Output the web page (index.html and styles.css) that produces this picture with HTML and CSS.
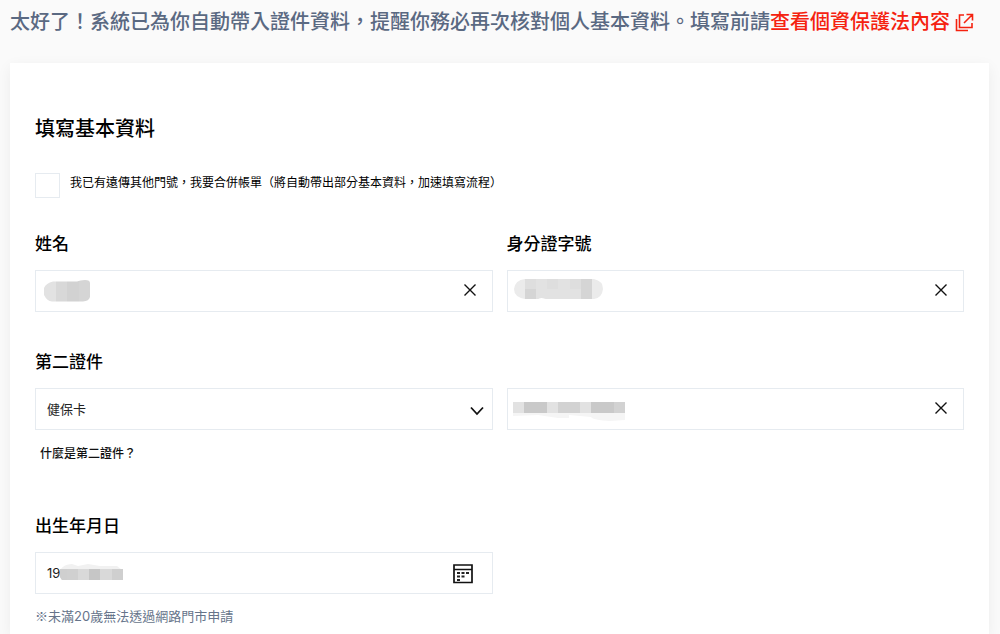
FILE: index.html
```html
<!DOCTYPE html>
<html lang="zh-Hant">
<head>
<meta charset="utf-8">
<meta name="viewport" content="width=device-width, initial-scale=1">
<title>填寫基本資料</title>
<link rel="stylesheet" href="styles.css">
</head>
<body>
<p class="notice">太好了！系統已為你自動帶入證件資料，提醒你務必再次核對個人基本資料。填寫前請<a class="notice-link" href="#privacy">查看個資保護法內容<svg class="external" viewBox="0 0 20 20" aria-hidden="true"><path d="M9 3H4.500V15.500H17V11M11.500 2.500H17.500V8.500M17 3L9 11M1.500 7V18.500H13"/></svg></a></p>
<main class="card">
  <h1 class="title">填寫基本資料</h1>
  <label class="merge"><input class="checkbox" type="checkbox"><span>我已有遠傳其他門號，我要合併帳單（將自動帶出部分基本資料，加速填寫流程）</span></label>
  <form class="form">
    <div class="field">
      <label class="label" for="name">姓名</label>
      <div class="control">
        <input class="box" id="name" type="text">
        <svg class="mask mask-name" viewBox="0 0 46 22" aria-hidden="true">
          <clipPath id="c1"><path d="M9 1.500H33Q36 0 41 0Q46 0 46 3V17Q45 21 39 21.500H8Q3 21 0 15V8Q2 3 9 1.500Z"/></clipPath>
          <g clip-path="url(#c1)"><path fill="#e2e2e2" d="M0 0h12v22H0z"/><path fill="#d8d8d8" d="M12 0h11v22H12z"/><path fill="#d2d2d2" d="M23 0h12v22H23z"/><path fill="#d5d5d5" d="M35 0h11v22H35z"/></g>
        </svg>
        <button class="icon" type="button" aria-label="清除姓名"><svg viewBox="0 0 14 14"><path d="M1.500 1.500L12.500 12.500M12.500 1.500L1.500 12.500"/></svg></button>
      </div>
    </div>
    <div class="field">
      <label class="label" for="idno">身分證字號</label>
      <div class="control">
        <input class="box" id="idno" type="text">
        <svg class="mask mask-id" viewBox="0 0 90 22" aria-hidden="true">
          <clipPath id="c2"><path d="M11 1H80Q89 3 89 11Q88 20 80 21H32Q27 19 24 21H11Q0 19 0 11Q1 2 11 1Z"/></clipPath>
          <g clip-path="url(#c2)"><path fill="#ebebeb" d="M0 0h90v22H0z"/><path fill="#dedede" d="M11 0h11v11H11zM33 0h11v11H33zM56 0h11v11H56z"/><path fill="#d5d5d5" d="M11 11h11v11H11zM67 0h11v22H67z"/><path fill="#e2e2e2" d="M22 0h11v22H22zM44 0h12v22H44zM33 11h11v11H33zM56 11h11v11H56z"/></g>
        </svg>
        <button class="icon" type="button" aria-label="清除身分證字號"><svg viewBox="0 0 14 14"><path d="M1.500 1.500L12.500 12.500M12.500 1.500L1.500 12.500"/></svg></button>
      </div>
    </div>
    <div class="field">
      <label class="label" for="second">第二證件</label>
      <div class="control">
        <select class="box" id="second"><option>健保卡</option></select>
        <svg class="chevron" viewBox="0 0 14 10" aria-hidden="true"><path d="M1 1.500L7 8L13 1.500"/></svg>
      </div>
      <a class="help" href="#second-id">什麼是第二證件？</a>
    </div>
    <div class="field field-end">
      <div class="control">
        <input class="box" type="text" aria-label="第二證件號碼">
        <svg class="mask mask-second" viewBox="0 0 112 20" aria-hidden="true"><path fill="#f5f5f5" d="M0 11H112V18L97 19Q80 18 78 15L56 13V16H45L25 13L0 14Z"/><path fill="#e2e2e2" d="M0 0h112v11H0z"/><path fill="#c9c9c9" d="M11 0h23v11H11zM78 0h23v11H78z"/><path fill="#d2d2d2" d="M45 0h22v11H45zM101 0h11v11h-11z"/></svg>
        <button class="icon" type="button" aria-label="清除第二證件號碼"><svg viewBox="0 0 14 14"><path d="M1.500 1.500L12.500 12.500M12.500 1.500L1.500 12.500"/></svg></button>
      </div>
    </div>
    <div class="field">
      <label class="label" for="birth">出生年月日</label>
      <div class="control">
        <input class="box" id="birth" type="text" value="19">
        <svg class="mask mask-birth" viewBox="0 0 63 17" aria-hidden="true"><path fill="#f1f1f1" d="M0 6Q4 0 12 0L18 2L28 0L40 2L57 2L62 6Z"/><path fill="#d9d9d9" d="M0 5h63v11H2L0 13z"/><path fill="#cfcfcf" d="M0 5h7v11H2L0 13zM52 5h11v11H52z"/><path fill="#c6c6c6" d="M29 5h11v11H29z"/><path fill="#d0d0d0" d="M7 5h11v11H7z"/></svg>
        <button class="icon icon-date" type="button" aria-label="選擇日期"><svg viewBox="0 0 20 20"><path d="M1 1H19V18.500H1ZM1 5.500H19"/><path class="dots" d="M4 8h3v2H4zM8.500 8h3v2h-3zM13 8h3v2h-3zM4 11.500h3v2H4zM8.500 11.500h3v2h-3zM4 15h3v2H4z"/></svg></button>
      </div>
      <p class="note"><span class="note-mark">※</span>未滿20歲無法透過網路門市申請</p>
    </div>
  </form>
</main>
</body>
</html>
```
FILE: styles.css
```css
* { box-sizing: border-box; }

body {
  margin: 0;
  min-height: 100vh;
  display: flex;
  flex-direction: column;
  background: #fafafa;
  color: #000;
  font-family: "Inter", "Noto Sans CJK TC", sans-serif;
}

.notice {
  margin: 0;
  padding: 7px 10px 26px;
  font-size: 20px;
  line-height: 30px;
  font-weight: 500;
  color: #5a6982;
}

.notice-link { color: #f5220f; text-decoration: none; }

.external {
  width: 20px;
  height: 20px;
  margin-left: 5px;
  vertical-align: -3px;
  fill: none;
  stroke: currentColor;
  stroke-width: 1.6;
}

.card {
  flex: 1;
  margin: 0 11px 0 10px;
  padding: 51px 25px 6px;
  background: #fff;
  box-shadow: 0 4px 14px rgba(0, 0, 0, 0.06);
}

.title {
  margin: 0 0 29px;
  font-size: 20px;
  line-height: 30px;
  font-weight: 500;
}

.merge {
  display: flex;
  gap: 10px;
  font-size: 12px;
  line-height: 20px;
}

.checkbox {
  appearance: none;
  flex: none;
  width: 25px;
  height: 25px;
  margin: 0;
  border: 1px solid #e6ebf0;
  background: #fff;
}

.form {
  display: grid;
  grid-template-columns: 1fr 1fr;
  column-gap: 14px;
  margin-top: 32px;
}

.field { padding-bottom: 36px; }
.field:last-child { padding-bottom: 0; }
.field-end { padding-top: 40px; }

.label {
  display: block;
  margin-bottom: 12px;
  font-size: 17px;
  line-height: 28px;
  font-weight: 500;
}

.control { position: relative; }

.box {
  appearance: none;
  display: block;
  width: 100%;
  height: 42px;
  padding: 0 11px;
  border: 1px solid #e6ebf0;
  border-radius: 0;
  background: #fff;
  color: #222;
  font: 13px "Inter", "Noto Sans CJK TC", sans-serif;
}

.icon {
  position: absolute;
  top: 8px;
  right: 11px;
  width: 24px;
  height: 24px;
  padding: 5px;
  border: 0;
  background: none;
}

.icon svg {
  display: block;
  width: 14px;
  height: 14px;
  fill: none;
  stroke: #111;
  stroke-width: 1.4;
}

.icon-date { top: 10px; right: 18px; padding: 2px; }
.icon-date svg { width: 20px; height: 20px; stroke-width: 1.7; }
.icon-date .dots { fill: #222; stroke: none; }

.chevron {
  position: absolute;
  top: 18px;
  right: 9px;
  width: 14px;
  height: 10px;
  fill: none;
  stroke: #111;
  stroke-width: 1.8;
  pointer-events: none;
}

.mask { position: absolute; pointer-events: none; }
.mask-name { top: 10px; left: 9px; width: 46px; height: 22px; }
.mask-id { top: 8px; left: 7px; width: 90px; height: 22px; }
.mask-second { top: 14px; left: 6px; width: 112px; height: 20px; }
.mask-birth { top: 12px; left: 25px; width: 63px; height: 17px; }

.help {
  display: block;
  width: fit-content;
  margin: 14px 0 12px 5px;
  font-size: 12px;
  line-height: 20px;
  font-weight: 500;
  color: #111;
  text-decoration: none;
}

.note {
  margin: 12px 0 0;
  font-size: 13px;
  line-height: 20px;
  color: #66748a;
}

.note-mark { font-family: "Noto Sans CJK TC", sans-serif; }
```
